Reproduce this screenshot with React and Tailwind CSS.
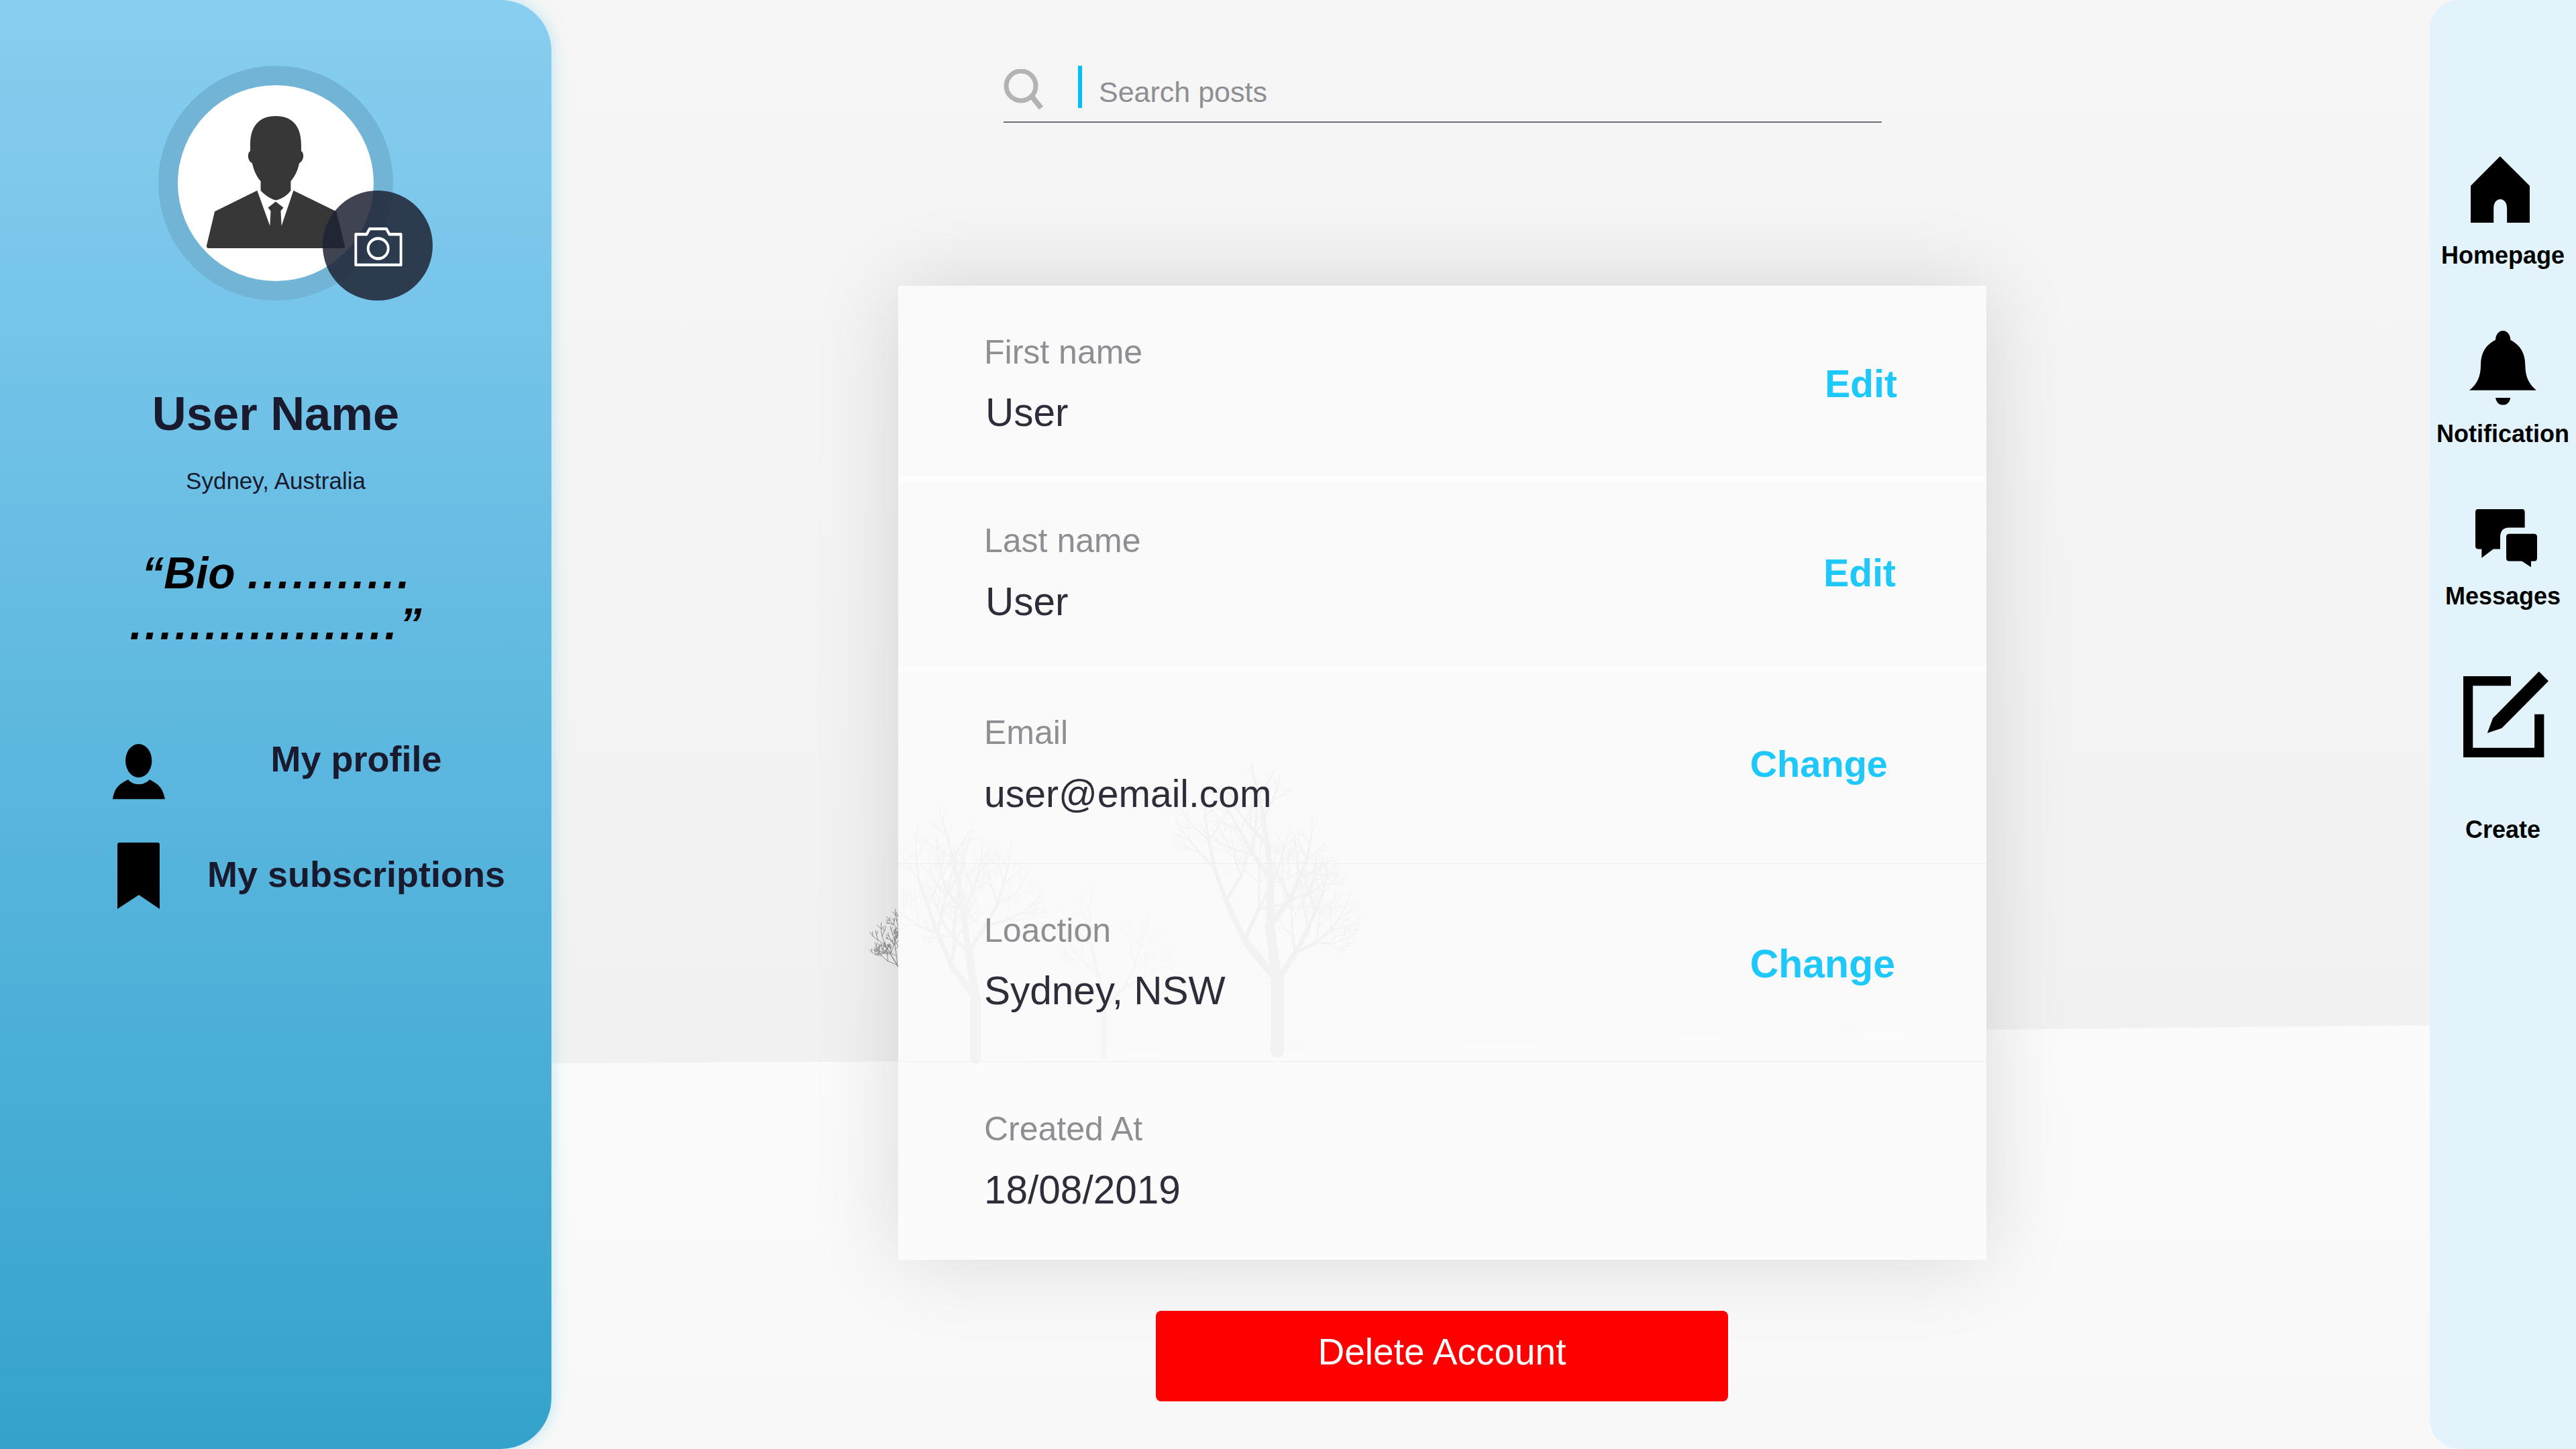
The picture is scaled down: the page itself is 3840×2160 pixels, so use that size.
import React from "react";

function rng(seed) {
  let s = seed;
  return () => {
    s = (s * 16807) % 2147483647;
    return (s - 1) / 2147483646;
  };
}

function grow(x, y, len, ang, w, depth, r, out) {
  const x2 = x + Math.cos(ang) * len;
  const y2 = y + Math.sin(ang) * len;
  out.push({ x, y, x2, y2, w });
  if (depth <= 0) return;
  const up = -Math.PI / 2;
  const lead = ang + (up - ang) * 0.2 + (r() - 0.5) * 0.3;
  grow(x2, y2, len * (0.74 + r() * 0.12), lead, w * 0.74, depth - 1, r, out);
  const side = r() > 0.5 ? 1 : -1;
  grow(x2, y2, len * (0.55 + r() * 0.2), lead + side * (0.45 + r() * 0.45), w * 0.55, depth - 1, r, out);
  if (r() > 0.6) {
    grow(x2, y2, len * (0.45 + r() * 0.2), lead - side * (0.5 + r() * 0.5), w * 0.45, depth - 1, r, out);
  }
}

function Tree({ x, y, len, w, depth, seed, color }) {
  const out = [];
  grow(x, y, len, -Math.PI / 2, w, depth, rng(seed), out);
  return (
    <g stroke={color} strokeLinecap="round" fill="none">
      {out.map((s, i) => (
        <line key={i} x1={s.x} y1={s.y} x2={s.x2} y2={s.y2} strokeWidth={Math.max(s.w, 0.9)} />
      ))}
    </g>
  );
}

function Backdrop() {
  return (
    <svg className="absolute inset-0" width="3840" height="2160" viewBox="0 0 3840 2160">
      <defs>
        <linearGradient id="sky" x1="0" y1="0" x2="0" y2="1">
          <stop offset="0" stopColor="#f6f6f6" />
          <stop offset="1" stopColor="#f1f1f1" />
        </linearGradient>
        <linearGradient id="snow" x1="0" y1="0" x2="0" y2="1">
          <stop offset="0" stopColor="#fbfbfb" />
          <stop offset="1" stopColor="#f8f8f8" />
        </linearGradient>
        <clipPath id="incard"><rect x="1339" y="426" width="1622" height="1452" /></clipPath>
        <clipPath id="outcard"><rect x="1295" y="1320" width="44" height="180" /></clipPath>
      </defs>
      <rect width="3840" height="1600" fill="url(#sky)" />
      <path d="M0 1590 L1339 1582 L2961 1535 L3840 1526 V2160 H0 Z" fill="url(#snow)" />
      <g clipPath="url(#incard)">
        <Tree x={1454} y={1578} len={90} w={16} depth={7} seed={1234} color="#adadad" />
        <Tree x={1904} y={1567} len={105} w={20} depth={7} seed={4321} color="#a6a6a6" />
        <Tree x={1645} y={1575} len={70} w={8} depth={6} seed={777} color="#c0c0c0" />
      </g>
      <g clipPath="url(#outcard)">
        <Tree x={1352} y={1500} len={42} w={3} depth={6} seed={2222} color="#8a8a8a" />
      </g>
    </svg>
  );
}

function Row({ label, value, pt, gap, action, actionMt, actionMr, actionSize, line, band, h, valueSize, valueMl }) {
  return (
    <div
      className={`relative flex items-start justify-between pl-[128px] ${line ? "border-b border-[#eeeeee]" : ""} ${band ? "border-b-[10px] border-[#fdfdfd]" : ""}`}
      style={{ height: h }}
    >
      <div style={{ paddingTop: pt }}>
        <div className="text-[50px] leading-[60px] text-[#8e8e93]">{label}</div>
        <div className="leading-[70px] text-[#2e2e3a]" style={{ marginTop: gap, marginLeft: valueMl || 0, fontSize: valueSize || 58.5 }}>{value}</div>
      </div>
      {action && (
        <div className="font-bold leading-[60px] text-[#1ec8fb]" style={{ marginTop: actionMt, marginRight: actionMr, fontSize: actionSize }}>
          {action}
        </div>
      )}
    </div>
  );
}

export default function App() {
  return (
    <div className="relative flex h-[2160px] w-[3840px] overflow-hidden bg-[#f6f6f6] font-['Liberation_Sans',Arial,sans-serif]">
      <Backdrop />

      <aside className="relative flex h-full w-[822px] shrink-0 flex-col items-center rounded-r-[76px] bg-gradient-to-b from-[#88cef0] via-[#5db8e0] to-[#33a3cc] pt-[98px] shadow-[0_0_22px_rgba(130,215,240,0.55)]">
        <div className="relative h-[350px] w-[350px]">
          <div className="flex h-full w-full items-center justify-center rounded-full bg-[#72b4d6]">
            <div className="relative flex h-[292px] w-[292px] items-start justify-center rounded-full bg-white pt-[46px]">
              <svg width="206" height="197" viewBox="537 273 358 309" preserveAspectRatio="none" fill="#373737">
                <path d="M716 273C670 273 650 300 650 340L650 355C642 358 642 378 655 383C662 410 672 420 677 425L677 447C690 460 705 467 716 470C730 467 745 460 755 447L755 425C762 418 772 405 777 383C790 378 790 358 782 355L782 340C782 300 762 273 716 273Z" />
                <path d="M668 447L558 496L537 576Q536 582 542 582L890 582Q896 582 895 576L873 496L762 447L731 530L729 495L736 487L716 473L696 487L703 495L701 530Z" />
              </svg>
            </div>
          </div>
          <div className="absolute left-[245px] top-[186px] flex h-[164px] w-[164px] items-center justify-center rounded-full bg-[#1f2233]/85">
            <svg className="mt-[3px] ml-[1px]" width="74" height="60" viewBox="915 528 133 96" preserveAspectRatio="none" fill="none" stroke="#ffffff" strokeWidth="7" strokeLinejoin="round">
              <path d="M921 546H950L958 533H1003L1011 546H1042V619H921Z" />
              <ellipse cx="981" cy="580" rx="27" ry="24" />
            </svg>
          </div>
        </div>

        <h1 className="mt-[129px] text-[70.5px] font-bold leading-[80px] text-[#1a1a2e]">User Name</h1>
        <p className="mt-[40px] text-[35px] leading-[40px] text-[#1a1a2e]">Sydney, Australia</p>
        <p className="mt-[79px] w-[470px] text-center text-[66px] font-bold italic leading-[76px] text-black">
          “Bio <span className="tracking-[4px]">..........</span>.
          <br />
          <span className="tracking-[4px]">..................</span>”
        </p>

        <nav className="mt-[133px] flex w-full flex-col gap-[64px] pl-[160px]">
          <div className="flex items-start">
            <svg className="mt-[8px] ml-[8px]" width="78" height="83" viewBox="293 147 135 113" preserveAspectRatio="none" fill="#000000">
              <ellipse cx="360" cy="181" rx="34" ry="34" />
              <path d="M293 259C298 235 310 228 333 219C345 232 375 232 388 219C410 228 422 235 428 259Z" />
            </svg>
            <span className="ml-[8px] w-[554px] text-center text-[54px] font-bold leading-[60px] text-[#1a1a2e]">My profile</span>
          </div>
          <div className="flex items-start">
            <svg className="ml-[15px]" width="63" height="99" viewBox="0 0 63 99" fill="#000000">
              <path d="M3 0H60Q63 0 63 3V99L32 78L0 99V3Q0 0 3 0Z" />
            </svg>
            <span className="ml-[16px] mt-[17px] w-[554px] text-center text-[54px] font-bold leading-[60px] text-[#1a1a2e]">My subscriptions</span>
          </div>
        </nav>
      </aside>

      <main className="relative flex flex-1 flex-col items-start">
        <div className="ml-[674px] mt-[98px] flex h-[85px] w-[1309px] items-start border-b-2 border-[#6f6f78]">
          <svg className="mt-[5px]" width="60" height="60" viewBox="0 0 60 60" fill="none" stroke="#b3b3b3">
            <circle cx="26" cy="25" r="22" strokeWidth="7" />
            <path d="M43 42L56 58" strokeWidth="8" />
          </svg>
          <div className="ml-[51px] h-[63px] w-[6px] bg-[#00bfff]" />
          <span className="ml-[25px] mt-[14px] text-[43px] leading-[50px] text-[#8e8e93]">Search posts</span>
        </div>

        <section className="ml-[517px] mt-[243px] flex h-[1452px] w-[1622px] flex-col bg-[#fbfbfb]/90 shadow-[0_0_120px_rgba(0,0,0,0.13)]">
          <Row h={293} band pt={69} gap={25} valueMl={2} label="First name" value="User" action="Edit" actionMt={116} actionMr={133} actionSize={57} />
          <Row h={283} band pt={57} gap={26} valueMl={2} label="Last name" value="User" action="Edit" actionMt={105} actionMr={135} actionSize={57} />
          <Row h={286} line pt={60} gap={26} valueSize={57} label="Email" value="user@email.com" action="Change" actionMt={107} actionMr={147} actionSize={56} />
          <Row h={295} line pt={69} gap={25} label="Loaction" value="Sydney, NSW" action="Change" actionMt={119} actionMr={136} actionSize={59} />
          <Row h={295} pt={70} gap={26} label="Created At" value="18/08/2019" />
        </section>

        <button className="ml-[901px] mt-[76px] flex h-[135px] w-[853px] items-start justify-center rounded-[8px] bg-[#ff0000] pt-[26px] text-[55px] leading-[70px] text-white">
          Delete Account
        </button>
      </main>

      <aside className="relative flex h-full w-[218px] shrink-0 flex-col items-center rounded-l-[44px] bg-[#e3f3fb] pt-[233px] font-bold text-black">
        <svg className="mr-[8px]" width="88" height="99" viewBox="548 522 265 221" preserveAspectRatio="none" fill="#000000">
          <path d="M680 522L813 620V743H711V695C711 655 651 655 651 695V743H548V620Z" />
        </svg>
        <span className="mt-[29px] text-[36px] leading-[40px]">Homepage</span>

        <svg className="mt-[92px]" width="100" height="111" viewBox="543 1104 300 250" preserveAspectRatio="none" fill="#000000">
          <path d="M693 1104C675 1104 660 1118 660 1135C620 1150 594 1175 594 1220C594 1260 575 1285 543 1304H843C812 1285 793 1260 793 1220C793 1175 765 1150 727 1135C727 1118 712 1104 693 1104Z" />
          <path d="M660 1329H727C722 1345 712 1353 693 1353C675 1353 665 1345 660 1329Z" />
        </svg>
        <span className="mt-[23px] text-[36px] leading-[40px]">Notification</span>

        <svg className="ml-[10px] mt-[92px]" width="92" height="87" viewBox="570 153 276 230" preserveAspectRatio="none" fill="#000000">
          <path d="M582 153H780Q791 153 791 165V226H720Q681 226 681 265V310H650L598 345V310H582Q570 310 570 298V165Q570 153 582 153Z" />
          <path d="M722 250H833Q846 250 846 262V345Q846 358 833 358H819V382L778 358H722Q708 358 708 345V262Q708 250 722 250Z" />
        </svg>
        <span className="mt-[23px] text-[36px] leading-[40px]">Messages</span>

        <svg className="ml-[8px] mt-[92px]" width="127" height="128" viewBox="515 787 383 333" preserveAspectRatio="none" fill="#000000">
          <path d="M515 805H729V842H558V1083H835V953H878V1120H515Z" />
          <path d="M855 787L898 824L688 1007L623 1026L648 968Z" />
        </svg>
        <span className="mt-[88px] text-[36px] leading-[40px]">Create</span>
      </aside>
    </div>
  );
}
